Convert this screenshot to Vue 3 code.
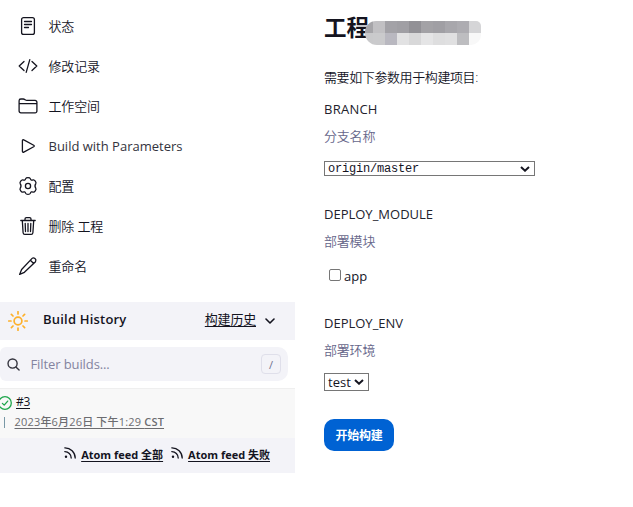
<script setup>
const tasks = [
  { icon: 'doc', label: '状态' },
  { icon: 'code', label: '修改记录' },
  { icon: 'folder', label: '工作空间' },
  { icon: 'play', label: 'Build with Parameters', latin: true },
  { icon: 'gear', label: '配置' },
  { icon: 'trash', label: '删除 工程' },
  { icon: 'pen', label: '重命名' },
]
const feeds = ['Atom feed 全部', 'Atom feed 失败']
const mosaic = [
  '#a6a5a9', '#c1c0c3', '#a3a2a7', '#a09fa4', '#929196', '#a3a2a6', '#a09fa4', '#a8a7ac', '#adacb1', '#d5d5d7',
  '#c9c9cb', '#cacacc', '#b9b8c0', '#e2e2e3', '#d8d8d9', '#e5e5e6', '#dededf', '#e0e0e1', '#bdbdc0', '#f8f8f8',
]
</script>

<template>
  <div class="page">
    <aside class="side">
      <nav class="tasks">
        <a v-for="t in tasks" :key="t.icon" class="task">
          <svg class="task-icon" viewBox="0 0 20 20">
            <g v-if="t.icon === 'doc'">
              <rect x="3.6" y="1.6" width="12.8" height="16.8" rx="2" />
              <path d="M6.500 5.500h7M6.500 8.500h7M6.500 11.500h4" />
            </g>
            <path v-else-if="t.icon === 'code'" d="M6 5.5L1.2 10 6 14.5M14 5.5l4.8 4.5-4.8 4.5M11.8 3.6L8.2 16.4" />
            <path v-else-if="t.icon === 'folder'" d="M1.1 6V4.8a1.8 1.8 0 0 1 1.8-1.8h2.4c1.6 0 2 1.4 3.6 1.4h8.200a1.800 1.800 0 0 1 1.800 1.800v8.900a1.800 1.800 0 0 1-1.800 1.800H2.900a1.800 1.800 0 0 1-1.800-1.800zM1.100 7.600h17.800" />
            <path v-else-if="t.icon === 'play'" d="M4.400 4.700v10.600c0 .8.7 1.200 1.400.8l9.900-5.300c.7-.4.7-1.200 0-1.600L5.800 3.900c-.7-.4-1.400 0-1.400.8z" />
            <g v-else-if="t.icon === 'gear'">
              <path d="M7.700 2.600C8.200 1.200 11.800 1.200 12.300 2.600C12.800 4.100 13.700 4.500 15.100 3.900C16.500 3.400 18.600 6.500 17.800 7.700C16.800 9.100 16.800 10.900 17.800 12.300C18.600 13.500 16.500 16.600 15.100 16.100C13.700 15.500 12.800 15.900 12.300 17.400C11.800 18.800 8.200 18.800 7.700 17.400C7.200 15.900 6.300 15.500 4.900 16.100C3.500 16.600 1.400 13.500 2.200 12.300C3.200 10.900 3.200 9.100 2.200 7.700C1.400 6.500 3.500 3.400 4.900 3.900C6.300 4.500 7.200 4.100 7.700 2.600z" />
              <circle cx="10" cy="10" r="2.600" />
            </g>
            <path v-else-if="t.icon === 'trash'" d="M2.800 4.500h14.400M4.300 4.500l.8 12.200c.1 1 .7 1.700 1.700 1.700h6.400c1 0 1.600-.7 1.700-1.700l.8-12.200M7 4.500V3c0-.9.500-1.400 1.400-1.400h3.200c.9 0 1.400.5 1.400 1.400v1.500M10 7.400v8.200M7.200 7.400l.3 8.200M12.800 7.400l-.3 8.200" />
            <path v-else d="M14.100 2.400c1.600-1.500 4.900.8 3.400 3.300L6.400 16.300l-4.800 2.100 2-4.900zM12.300 4.200l3.400 3.300" />
          </svg>
          <span :class="t.latin ? 'latin' : 'cjk'">{{ t.label }}</span>
        </a>
      </nav>

      <section class="history">
        <header class="history-head">
          <svg class="sun" viewBox="0 0 20 20">
            <circle cx="10" cy="10" r="3.900" />
            <path d="M10 .7v2.300M10 17v2.300M.7 10H3M17 10h2.300M3.400 3.400L5 5M15 15l1.600 1.600M3.400 16.600L5 15M15 5l1.600-1.600" />
          </svg>
          <strong class="history-title">Build History</strong>
          <a class="trend">构建历史</a>
          <svg class="chevron" viewBox="0 0 10 6"><path d="M1 1l4 4 4-4" /></svg>
        </header>

        <div class="search">
          <svg class="search-icon" viewBox="0 0 14 14">
            <circle cx="6" cy="6" r="4.900" /><path d="M9.600 9.600l3.400 3.400" />
          </svg>
          <span class="placeholder">Filter builds...</span>
          <kbd class="key">/</kbd>
        </div>

        <div class="build">
          <div class="build-line">
            <svg class="ok" viewBox="0 0 14 14">
              <circle cx="7" cy="7" r="6.300" /><path d="M4.400 7.400l1.800 1.700 3.500-4" />
            </svg>
            <a class="build-no">#3</a>
          </div>
          <div class="build-line second">
            <span class="bar"></span>
            <a class="date">2023年6月26日 下午1:29 <span class="zone">CST</span></a>
          </div>
        </div>

        <footer class="feeds">
          <a v-for="f in feeds" :key="f" class="feed">
            <svg class="rss" viewBox="0 0 12 12">
              <circle cx="2" cy="9.800" r="1.200" class="dot" />
              <path d="M.8 4.600a6.300 6.300 0 0 1 6.400 6.400M.8.8a10.200 10.200 0 0 1 10.400 10.200" />
            </svg>
            <span class="feed-text">{{ f }}</span>
          </a>
        </footer>
      </section>
    </aside>

    <main class="main">
      <h1 class="title">工程<span class="mosaic"><i v-for="(c, n) in mosaic" :key="n" :style="{ background: c }"></i></span></h1>
      <p class="intro">需要如下参数用于构建项目:</p>

      <div class="param branch">
        <div class="name n-branch">BRANCH</div>
        <div class="desc">分支名称</div>
        <div class="select wide"><span class="mono">origin/master</span>
          <svg class="arrow" viewBox="0 0 10 6"><path d="M1 1l4 3.700L9 1" /></svg>
        </div>
      </div>

      <div class="param module">
        <div class="name">DEPLOY_MODULE</div>
        <div class="desc">部署模块</div>
        <label class="check"><span class="box"></span><span>app</span></label>
      </div>

      <div class="param env">
        <div class="name">DEPLOY_ENV</div>
        <div class="desc">部署环境</div>
        <div class="select small"><span>test</span>
          <svg class="arrow" viewBox="0 0 10 6"><path d="M1 1l4 3.700L9 1" /></svg>
        </div>
      </div>

      <button class="submit">开始构建</button>
    </main>
  </div>
</template>

<style>
body { background: #fff; }
</style>

<style scoped>
* { box-sizing: border-box; }
.page {
  display: flex;
  width: 633px;
  height: 507px;
  overflow: hidden;
  color: #14141f;
  font: 13px/20px "Open Sans", "Noto Sans CJK SC", sans-serif;
  white-space: nowrap;
}
svg { display: block; flex: none; fill: none; stroke: currentColor; stroke-linecap: round; stroke-linejoin: round; }
.side { width: 295px; flex: none; }
.tasks { padding-top: 6px; height: 302px; }
.task { display: flex; align-items: center; height: 40px; padding-left: 18px; gap: 10.500px; }
.task-icon { width: 20px; height: 20px; stroke-width: 1.3; }
.cjk { font-weight: 350; letter-spacing: -0.150px; padding-bottom: 1px; }
.latin { font-weight: 400; color: #33333d; }
.history-head { display: flex; align-items: center; height: 38px; background: #f3f3f8; padding: 0 20px 0 8px; }
.sun { width: 20px; height: 20px; stroke: #fdb02b; stroke-width: 1.7; }
.history-title { margin-left: 15px; font-size: 13px; font-weight: 600; letter-spacing: 0.2px; line-height: 20px; padding-bottom: 4px; }
.trend { margin-left: auto; padding-bottom: 4px; letter-spacing: -0.2px; text-decoration: underline; text-underline-offset: 2px; }
.chevron { width: 10px; height: 6px; margin-left: 9px; stroke-width: 1.6; }
.search { display: flex; align-items: center; width: 288px; height: 34px; margin-top: 7px; padding: 0 7px; background: #f3f3f8; border-radius: 6px 10px 10px 6px; }
.search-icon { width: 13px; height: 13px; stroke-width: 1.5; color: #33333d; }
.placeholder { margin-left: 10.500px; letter-spacing: -0.100px; color: #8484a0; }
.key { display: flex; align-items: center; justify-content: center; width: 20px; height: 20px; margin-left: auto; border: 1px solid #dfdfea; border-radius: 4px; color: #70708f; font: 11px "Open Sans", sans-serif; }
.build { height: 50px; margin-top: 7px; padding-top: 3px; border-top: 1px solid #efefef; background: #f8f8f8; }
.build-line { display: flex; align-items: center; height: 20px; }
.ok { width: 14px; height: 14px; margin: 1px 4px 0 -2px; stroke: #1ea64b; stroke-width: 1.3; }
.build-no { font-size: 12px; text-decoration: underline; text-underline-offset: 2px; padding-bottom: 1px; letter-spacing: -0.3px; }
.bar { width: 1px; height: 11px; margin: 0 9.500px 0 4px; background: #7998a6; }
.date { color: #6c6c70; font-size: 11px; font-weight: 500; letter-spacing: 0.180px; text-decoration: underline; text-underline-offset: 2px; }
.zone { font-weight: 600; }
.feeds { display: flex; align-items: center; justify-content: flex-end; gap: 8px; height: 35px; padding-right: 25px; background: #f3f3f8; }
.feed { display: flex; align-items: center; gap: 5px; font-size: 11px; font-weight: 700; }
.rss { width: 12px; height: 12px; margin-bottom: 5px; stroke-width: 1.3; }
.dot { fill: currentColor; stroke: none; }
.feed-text { padding-bottom: 1px; text-decoration: underline; text-underline-offset: 2px; }
.main { padding: 12px 0 0 29px; }
.title { position: relative; height: 31px; margin: 0; font-size: 22.500px; font-weight: 700; line-height: 31px; }
.mosaic { position: absolute; left: 41px; top: 9px; display: grid; grid-template-columns: 8px repeat(9, 12px); grid-template-rows: 12px 12px; width: 116px; height: 24px; overflow: hidden; border-radius: 11px 5px 10px 12px; }
.intro { margin: 24px 0 0; height: 20px; font-weight: 350; font-size: 13px; letter-spacing: -0.4px; }
.param { display: flex; flex-direction: column; align-items: flex-start; }
.branch { margin-top: 12px; height: 105px; }
.module { height: 109px; }
.env { height: 106px; }
.name { line-height: 20px; color: #22222c; }
.n-branch { letter-spacing: 0.250px; }
.desc { margin-top: 7px; line-height: 20px; font-weight: 350; letter-spacing: -0.200px; color: #66668a; }
.select { display: flex; align-items: center; justify-content: space-between; border: 1px solid #767676; background: #fff; padding: 0 4px; }
.arrow { width: 10px; height: 6px; stroke-width: 2; stroke-linecap: butt; stroke-linejoin: miter; }
.wide { width: 211px; height: 15px; margin-top: 15px; padding-left: 3px; }
.mono { padding-top: 2px; font: 12px/13px "Liberation Mono", monospace; letter-spacing: -0.200px; }
.small { width: 45px; height: 18px; margin-top: 13px; padding-left: 3px; line-height: 16px; }
.small span { padding-bottom: 1px; }
.check { display: flex; align-items: center; gap: 3px; height: 20px; margin: 15px 0 0 5px; }
.box { width: 12px; height: 12px; margin-bottom: 3px; border: 1px solid #767676; border-radius: 2px; background: #fff; }
.submit { display: flex; align-items: center; justify-content: center; width: 70px; height: 32px; padding: 0; border: 0; border-radius: 10px; background: #0062d3; color: #fff; font: 700 12px "Open Sans", "Noto Sans CJK SC", sans-serif; letter-spacing: -0.300px; }
</style>
